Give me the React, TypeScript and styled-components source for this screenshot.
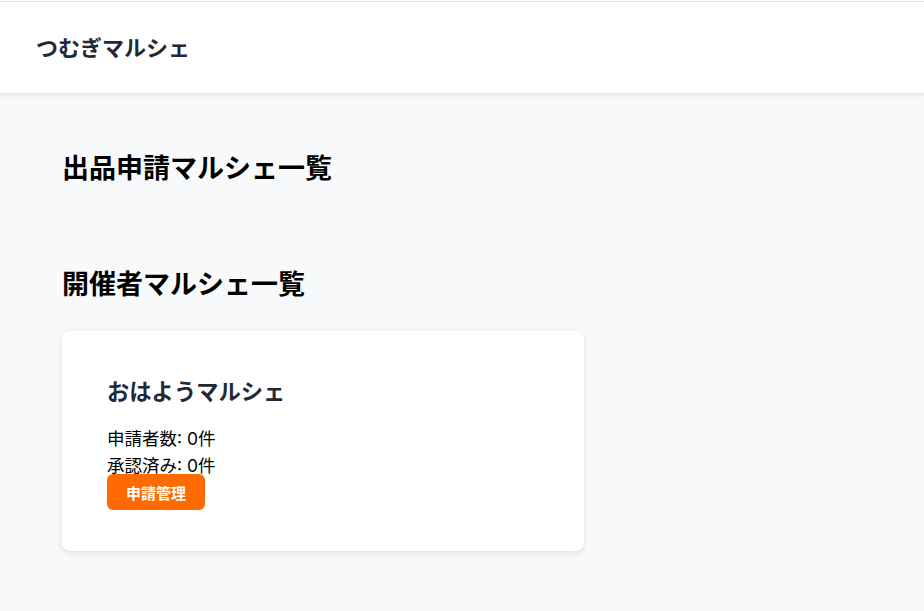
import React from "react";
import styled, { createGlobalStyle } from "styled-components";

const GlobalStyle = createGlobalStyle`
  html, body {
    margin: 0;
    padding: 0;
    background: #f8f9fb;
    font-family: "Noto Sans CJK JP", "Noto Sans", sans-serif;
  }
  * { box-sizing: border-box; }
`;

const TopStrip = styled.div`
  background: #ffffff;
  padding-top: 1px;
`;

const Header = styled.header`
  height: 92px;
  background: #ffffff;
  border-top: 1px solid #e3e3e3;
  box-shadow: 0 2px 4px rgba(0, 0, 0, 0.1);
  display: flex;
  align-items: center;
  padding: 0 36px 4px;
  position: relative;
`;

const Brand = styled.div`
  font-size: 22px;
  font-weight: 700;
  color: #1f2937;
  line-height: 1;
`;

const Main = styled.main`
  padding: 58px 62px 40px;
`;

const SectionTitle = styled.h2<{ $gap: number }>`
  margin: 0 0 ${(p) => p.$gap}px;
  font-size: 27px;
  font-weight: 700;
  color: #000000;
  line-height: 32px;
`;

const Card = styled.div`
  width: 522px;
  background: #ffffff;
  border-radius: 8px;
  box-shadow: 0 2px 6px rgba(0, 0, 0, 0.1);
  padding: 45px 45px 41px;
  display: flex;
  flex-direction: column;
  align-items: flex-start;
`;

const CardTitle = styled.h3`
  margin: 0 0 21px;
  font-size: 22.3px;
  font-weight: 700;
  color: #1f2937;
  line-height: 28px;
`;

const Stat = styled.p`
  margin: 0;
  font-family: "Inter", "Noto Sans CJK JP", sans-serif;
  font-size: 17.5px;
  line-height: 27px;
  color: #000000;
`;

const ManageButton = styled.button`
  margin-top: -5px;
  height: 36px;
  padding: 0 19px;
  border: none;
  border-radius: 6px;
  background: #ff6b00;
  color: #ffffff;
  font-family: inherit;
  font-size: 15px;
  font-weight: 700;
  cursor: pointer;
`;

export default function App() {
  return (
    <>
      <GlobalStyle />
      <TopStrip>
        <Header>
          <Brand>つむぎマルシェ</Brand>
        </Header>
      </TopStrip>
      <Main>
        <SectionTitle $gap={84}>出品申請マルシェ一覧</SectionTitle>
        <SectionTitle $gap={32}>開催者マルシェ一覧</SectionTitle>
        <Card>
          <CardTitle>おはようマルシェ</CardTitle>
          <Stat>申請者数: 0件</Stat>
          <Stat>承認済み: 0件</Stat>
          <ManageButton>申請管理</ManageButton>
        </Card>
      </Main>
    </>
  );
}
